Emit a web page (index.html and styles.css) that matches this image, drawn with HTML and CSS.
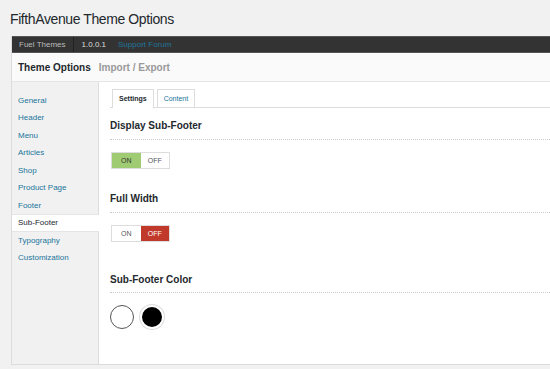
FILE: index.html
```html
<!DOCTYPE html>
<html lang="en">
  <head>
    <meta charset="UTF-8" />
    <meta name="viewport" content="width=device-width, initial-scale=1.0" />
    <title>FifthAvenue Theme Options</title>
    <link rel="stylesheet" href="styles.css">
  </head>
  <body>
    <h1 class="page-title">FifthAvenue Theme Options</h1>

    <div class="options-panel">
      <div class="topbar">
        <span class="topbar-brand">Fuel Themes</span>
        <span class="topbar-version">1.0.0.1</span>
        <a class="topbar-link" href="#">Support Forum</a>
      </div>

      <div class="panel-header">
        <span class="header-current">Theme Options</span>
        <a class="header-link" href="#">Import / Export</a>
      </div>

      <div class="panel-body">
        <ul class="side-menu">
          <li><a href="#">General</a></li>
          <li><a href="#">Header</a></li>
          <li><a href="#">Menu</a></li>
          <li><a href="#">Articles</a></li>
          <li><a href="#">Shop</a></li>
          <li><a href="#">Product Page</a></li>
          <li><a href="#">Footer</a></li>
          <li class="active"><a href="#">Sub-Footer</a></li>
          <li><a href="#">Typography</a></li>
          <li><a href="#">Customization</a></li>
        </ul>

        <div class="panel-main">
          <div class="tabs">
            <span class="tab tab-active">Settings</span>
            <span class="tab">Content</span>
          </div>

          <div class="option option-first">
            <h3 class="option-title">Display Sub-Footer</h3>
            <div class="switch">
              <span class="switch-on selected">ON</span>
              <span class="switch-off">OFF</span>
            </div>
          </div>

          <div class="option">
            <h3 class="option-title">Full Width</h3>
            <div class="switch">
              <span class="switch-on">ON</span>
              <span class="switch-off selected">OFF</span>
            </div>
          </div>

          <div class="option option-colors">
            <h3 class="option-title">Sub-Footer Color</h3>
            <div class="swatches">
              <span class="swatch swatch-white"></span>
              <span class="swatch swatch-black"></span>
            </div>
          </div>
        </div>
      </div>
    </div>
  </body>
</html>
```

FILE: styles.css
```css
body {
  font-family: "Liberation Sans", Arial, sans-serif;
  margin: 0;
  padding: 0;
  background-color: #f1f1f1;
  overflow: hidden;
  color: #23282d;
}

a {
  text-decoration: none;
}

.page-title {
  margin: 0;
  padding: 11px 0 0 10px;
  height: 25px;
  font-size: 14px;
  letter-spacing: -0.4px;
  font-weight: normal;
  color: #23282d;
}

.options-panel {
  margin-left: 11px;
  width: 560px;
  border-left: 1px solid #dcdcdc;
  border-bottom: 1px solid #dcdcdc;
}

.topbar {
  display: flex;
  align-items: center;
  height: 15px;
  background-color: #333;
  border-top: 1px solid #555;
  border-bottom: 1px solid #555;
  font-size: 8px;
}

.topbar-brand {
  color: #bbb;
  padding: 0 7px 0 7px;
  line-height: 15px;
  border-right: 1px solid #222;
}

.topbar-version {
  color: #ddd;
  padding: 0 0 0 8px;
}

.topbar-link {
  color: #21759b;
  padding-left: 12px;
}

.panel-header {
  display: flex;
  align-items: center;
  gap: 8px;
  height: 28px;
  padding-left: 6px;
  background-color: #fafafa;
  border-bottom: 1px solid #e5e5e5;
  font-size: 10px;
  font-weight: bold;
}

.header-current {
  color: #23282d;
}

.header-link {
  color: #999;
}

.panel-body {
  display: flex;
  height: 282px;
}

.side-menu {
  list-style: none;
  margin: 0;
  padding: 9.5px 0 0 0;
  width: 86px;
  background-color: #f1f1f1;
  border-right: 1px solid #dcdcdc;
  font-size: 8px;
}

.side-menu li {
  height: 17.5px;
  line-height: 17.5px;
  padding-left: 6px;
}

.side-menu a {
  color: #21759b;
}

.side-menu li.active {
  background-color: #fff;
  margin-right: -1px;
  border-top: 1px solid #e5e5e5;
  border-bottom: 1px solid #e5e5e5;
  height: 15.5px;
  line-height: 15.5px;
}

.side-menu li.active a {
  color: #23282d;
}

.panel-main {
  flex: 1;
  background-color: #fff;
  padding: 7px 0 0 11px;
}

.tabs {
  display: flex;
  gap: 3px;
  padding-left: 2px;
  border-bottom: 1px solid #ddd;
  height: 18px;
}

.tab {
  display: block;
  height: 17px;
  line-height: 17px;
  padding: 0 6px;
  border: 1px solid #ddd;
  border-bottom: none;
  font-size: 7px;
  color: #21759b;
  background-color: #fff;
}

.tab-active {
  color: #23282d;
  height: 18px;
  font-weight: bold;
}

.option {
  padding-top: 23px;
}

.option-first {
  padding-top: 11px;
}

.option-title {
  margin: 0;
  font-size: 10px;
  font-weight: bold;
  line-height: 14px;
  padding-bottom: 6px;
  border-bottom: 1px dotted #ccc;
}

.switch {
  display: flex;
  margin: 12px 0 0 1px;
  width: 59px;
  height: 17px;
  border: 1px solid #ddd;
  box-sizing: border-box;
  font-size: 7px;
}

.switch span {
  flex: 1;
  text-align: center;
  line-height: 15px;
  color: #555;
}

.switch-on.selected {
  background-color: #9fcb72;
  color: #333;
}

.switch-off.selected {
  background-color: #c0392b;
  color: #fff;
}

.option-colors {
  padding-top: 31px;
}

.option-colors .option-title {
  padding-bottom: 5px;
}

.swatches {
  display: flex;
  gap: 6px;
  margin-top: 12px;
}

.swatch {
  display: block;
  width: 24px;
  height: 24px;
  border-radius: 50%;
  box-sizing: border-box;
}

.swatch-white {
  background-color: #fff;
  border: 1px solid #555;
}

.swatch-black {
  background-color: #000;
  border: 2px solid #fff;
  box-shadow: 0 0 0 1px #ddd;
}
```
